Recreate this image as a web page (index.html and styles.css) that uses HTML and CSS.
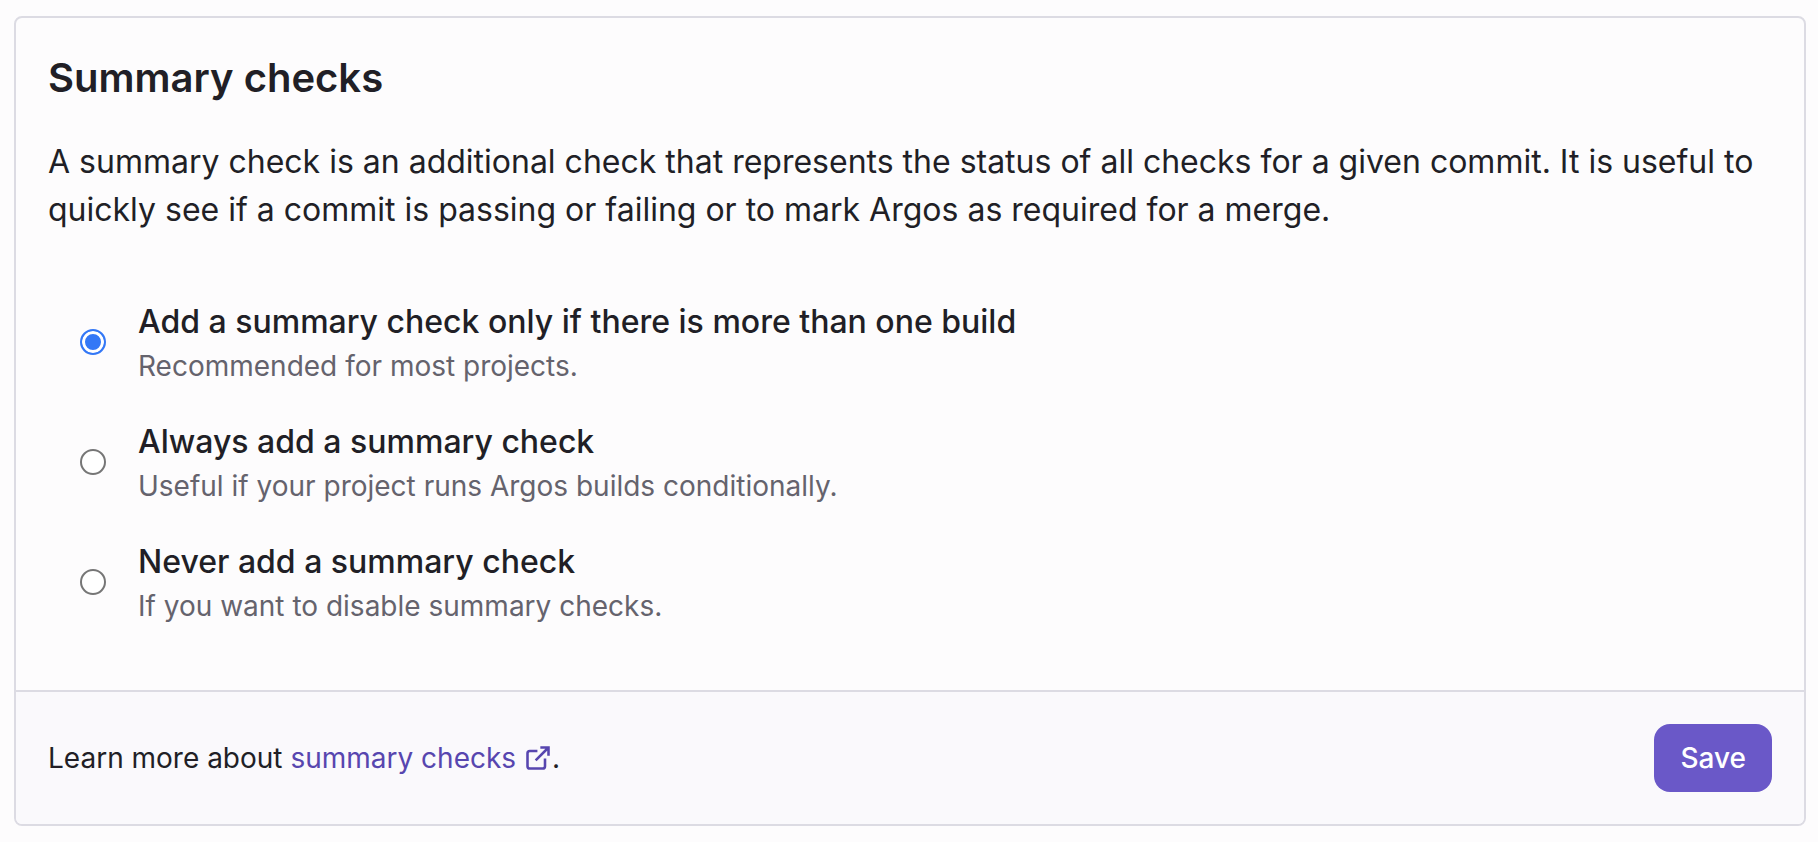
FILE: index.html
```html
<!DOCTYPE html>
<html lang="en">
<head>
<meta charset="utf-8">
<title>Summary checks</title>
<link rel="stylesheet" href="styles.css">
</head>
<body>
<form class="card">
  <div class="card-body">
    <h2 class="card-title">Summary checks</h2>
    <p class="card-text">A summary check is an additional check that represents the status of all checks for a given commit. It is useful to quickly see if a commit is passing or failing or to mark Argos as required for a merge.</p>
    <div class="options" role="radiogroup" aria-label="Summary checks">
      <div class="option">
        <input class="option-radio" type="radio" name="check" id="auto" aria-describedby="auto-hint" checked>
        <div class="option-content">
          <label class="option-label" for="auto">Add a summary check only if there is more than one build</label>
          <p class="option-hint" id="auto-hint">Recommended for most projects.</p>
        </div>
      </div>
      <div class="option">
        <input class="option-radio" type="radio" name="check" id="always" aria-describedby="always-hint">
        <div class="option-content">
          <label class="option-label" for="always">Always add a summary check</label>
          <p class="option-hint" id="always-hint">Useful if your project runs Argos builds conditionally.</p>
        </div>
      </div>
      <div class="option">
        <input class="option-radio" type="radio" name="check" id="never" aria-describedby="never-hint">
        <div class="option-content">
          <label class="option-label" for="never">Never add a summary check</label>
          <p class="option-hint" id="never-hint">If you want to disable summary checks.</p>
        </div>
      </div>
    </div>
  </div>
  <div class="card-footer">
    <p class="learn-more">Learn more about <a class="link" href="#">summary checks <svg class="link-icon" viewBox="0 0 24 24" aria-hidden="true"><path d="M18 12.5V19a2 2 0 0 1-2 2H5a2 2 0 0 1-2-2V8a2 2 0 0 1 2-2h6.500M14 3h7v7M10 14 21 3"/></svg></a>.</p>
    <button class="save" type="button">Save</button>
  </div>
</form>
</body>
</html>
```
FILE: styles.css
```css
* { box-sizing: border-box; }
body {
  margin: 0;
  padding: 16px 12px 16px 14px;
  background: #fdfcfd;
  color: #211f26;
  font-family: Inter, sans-serif;
}
h2, p { margin: 0; }
.card {
  border: 2px solid #dcdbe3;
  border-radius: 8px;
  overflow: hidden;
}
.card-body { padding: 32px; }
.card-title {
  margin-bottom: 32px;
  font-size: 40px;
  line-height: 56px;
  font-weight: 600;
}
.card-text {
  font-size: 32px;
  line-height: 48px;
}
.options {
  display: flex;
  flex-direction: column;
  gap: 32px;
  padding: 64px 32px 32px;
}
.option {
  display: flex;
  align-items: center;
  gap: 32px;
}
.option-radio {
  appearance: none;
  flex: none;
  width: 26px;
  height: 26px;
  margin: 0;
  border: 2px solid #767676;
  border-radius: 50%;
  background: #fff;
}
.option-radio:checked {
  border-color: #3478f6;
  background: #3478f6;
  box-shadow: inset 0 0 0 3px #fff;
}
.option-label {
  display: block;
  font-size: 32px;
  line-height: 48px;
  font-weight: 500;
}
.option-hint {
  color: #65636d;
  font-size: 28px;
  line-height: 40px;
}
.card-footer {
  display: flex;
  align-items: center;
  justify-content: space-between;
  padding: 32px;
  border-top: 2px solid #dcdbe3;
  background: #faf9fc;
}
.learn-more {
  font-size: 28px;
  line-height: 40px;
}
.link {
  color: #5746af;
  text-decoration: none;
}
.link-icon {
  width: 28px;
  height: 28px;
  vertical-align: -4px;
  fill: none;
  stroke: currentColor;
  stroke-width: 2.2;
}
.save {
  padding: 14px 26px;
  border: 0;
  border-radius: 16px;
  background: #6a58c8;
  color: #fff;
  font: 500 28px/40px Inter, sans-serif;
}
```
